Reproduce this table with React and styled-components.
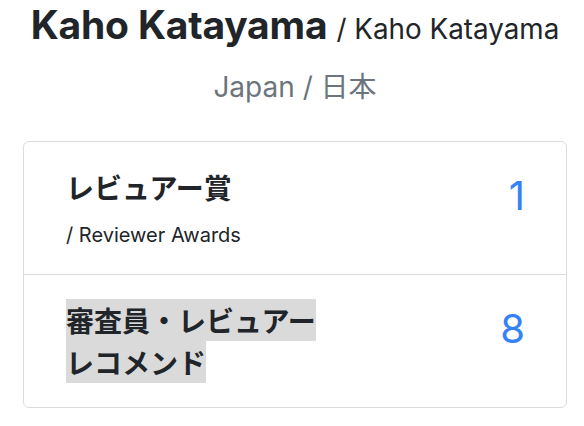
import styled, { createGlobalStyle } from "styled-components";

const AWARDS = [
  { key: "reviewer", title: "レビュアー賞", sub: "/ Reviewer Awards", count: 1 },
  { key: "recommend", title: "審査員・レビュアーレコメンド", count: 8, marked: true },
];

const Global = createGlobalStyle`
  html, body { margin: 0; padding: 0; background: #fff; }
  body { font-family: Inter, "Noto Sans CJK JP", sans-serif; color: #212529; }
`;

export default function App() {
  return (
    <>
      <Global />
      <Page>
        <Name>
          Kaho Katayama <NameAlt>/ Kaho Katayama</NameAlt>
        </Name>
        <Country>Japan / 日本</Country>
        <Card>
          {AWARDS.map(({ key, title, sub, count, marked }) => (
            <Row key={key}>
              <Label>
                <RowTitle>{marked ? <Mark>{title}</Mark> : title}</RowTitle>
                {sub && <RowSub>{sub}</RowSub>}
              </Label>
              <Count>{count}</Count>
            </Row>
          ))}
        </Card>
      </Page>
    </>
  );
}

const Page = styled.div`width: 544px; margin-left: 23px; text-align: center;`;

const Name = styled.h1`
  margin: 0; padding-top: 2px; font-size: 39px; font-weight: 700; line-height: 1.2; letter-spacing: -0.2px;
`;
const NameAlt = styled.span`font-size: 27.8px; font-weight: 400; letter-spacing: 0;`;

const Country = styled.p`
  margin: 17px 0 0; font-size: 28px; line-height: 1.5; color: #6c757d;
`;

const Card = styled.div`
  margin-top: 33px; border: 1px solid #dcdcdc; border-radius: 6px; text-align: left;
`;
const Row = styled.div`
  display: flex; align-items: flex-start; justify-content: space-between;
  padding: 24px 41px 24px 42px;
  border-bottom: 1px solid #dcdcdc;
  &:last-child { border-bottom: none; }
`;
const Label = styled.div`width: 266px;`;
const RowTitle = styled.div`
  font-family: "Noto Sans CJK JP", sans-serif; font-size: 28px; font-weight: 700; line-height: 1.5;
  color: #212529;
`;
const Mark = styled.span`background: #dadada; padding: 1px 0;`;
const RowSub = styled.div`margin-top: 12px; font-size: 20px; line-height: 1.5; color: #212529;`;
const Count = styled.div`font-size: 40px; line-height: 1.5; color: #3482f6;`;
